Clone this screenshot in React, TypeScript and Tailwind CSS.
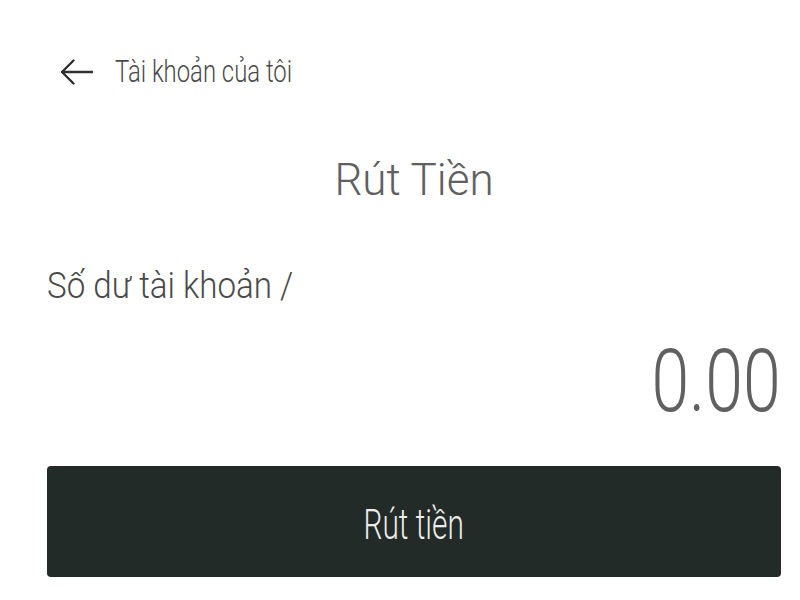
import React from "react";

export default function App() {
  return (
    <div
      className="w-[800px] h-[600px] bg-white overflow-hidden flex flex-col pl-[47px] pr-[19px]"
      style={{ fontFamily: "Roboto, 'Noto Sans', sans-serif" }}
    >
      <div className="mt-[52px] h-[40px] flex items-center">
        <svg width="34" height="30" viewBox="0 0 34 30" className="ml-[13px] shrink-0">
          <path
            d="M2 15 H32 M2 15 L13.5 3.5 M2 15 L13.5 26.5"
            fill="none"
            stroke="#2f2f2f"
            strokeWidth="2.4"
            strokeLinecap="round"
            strokeLinejoin="round"
          />
        </svg>
        <span className="ml-[21px] text-[31px] leading-[40px] font-light text-[#4a4a4a] whitespace-nowrap origin-left scale-x-[0.77]">
          Tài khoản của tôi
        </span>
      </div>

      <div className="mt-[62px] h-[52px] flex justify-center">
        <span className="text-[44px] leading-[52px] font-light text-[#606060] whitespace-nowrap">
          Rút Tiền
        </span>
      </div>

      <div className="mt-[58px] h-[44px] flex">
        <span className="text-[36px] leading-[44px] font-light text-[#4a4a4a] whitespace-nowrap origin-left scale-x-[0.92]">
          Số dư tài khoản /
        </span>
      </div>

      <div className="mt-[29px] h-[88px] flex justify-end">
        <span className="text-[87px] leading-[88px] font-light text-[#606060] whitespace-nowrap origin-right scale-x-[0.78]">
          0.00
        </span>
      </div>

      <button className="mt-[41px] h-[111px] w-full rounded-[4px] bg-[#222b27] flex items-center justify-center pt-[6px]">
        <span className="text-[42px] font-light text-[#ececec] whitespace-nowrap scale-x-[0.71]">
          Rút tiền
        </span>
      </button>
    </div>
  );
}
